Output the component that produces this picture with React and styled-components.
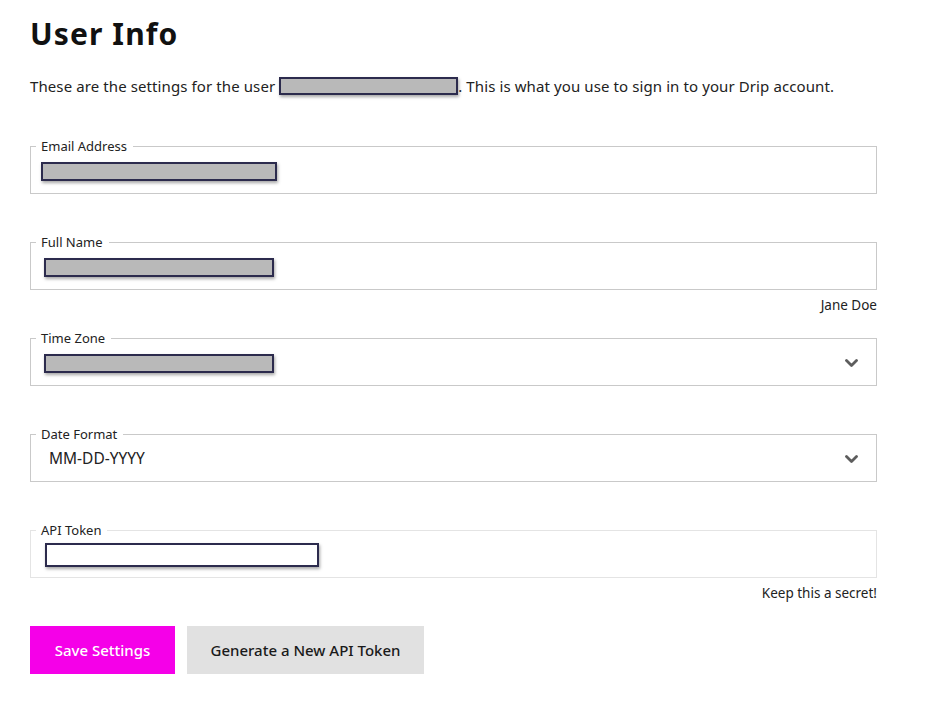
import React from "react";
import styled, { createGlobalStyle } from "styled-components";

const Global = createGlobalStyle`
  html, body { margin: 0; padding: 0; background: #fff; }
  body { font-family: "Noto Sans", Lato, sans-serif; color: #1c1c1c; }
`;

const Page = styled.div`
  width: 847px;
  padding: 14px 0 0 30px;
`;

const Title = styled.h1`
  margin: 0;
  font-size: 30px;
  line-height: 40px;
  font-weight: 700;
  letter-spacing: 1.1px;
  color: #111;
`;

const Intro = styled.p`
  margin: 22px 0 0;
  font-size: 15px;
  line-height: 20px;
  letter-spacing: 0.1px;
  color: #222;
  display: flex;
  align-items: center;
`;

const Redacted = styled.span`
  display: inline-block;
  box-sizing: border-box;
  flex: none;
  width: ${(p) => p.$w}px;
  height: ${(p) => p.$h || 19}px;
  margin-left: ${(p) => p.$ml || 0}px;
  background: ${(p) => (p.$blank ? "#fff" : "#b9b9b9")};
  border: 2px solid #2c2b4d;
  box-shadow: 1px 2px 3px rgba(0, 0, 0, 0.35);
`;

const Form = styled.div`
  margin-top: 42px;
  display: flex;
  flex-direction: column;
`;

const Group = styled.div`
  display: flex;
  flex-direction: column;
`;

const Fieldset = styled.fieldset`
  margin: 0;
  padding: 0 12px 0 10px;
  border: 1px solid ${(p) => (p.$light ? "#e4e4e4" : "#c9c9c9")};
  height: 56px;
  box-sizing: border-box;
  min-width: 0;
`;

const Legend = styled.legend`
  margin-left: -5px;
  padding: 0 6px 0 5px;
  font-size: 13px;
  line-height: 16px;
  color: #222;
`;

const Row = styled.div`
  height: 38px;
  margin-top: -2px;
  display: flex;
  align-items: center;
  justify-content: space-between;
`;

const Value = styled.span`
  font-size: 15.5px;
  color: #222;
  margin-left: 8px;
  margin-top: -3px;
`;

const Hint = styled.div`
  height: 40px;
  box-sizing: border-box;
  padding-top: 7px;
  text-align: right;
  font-size: 13.5px;
  line-height: 16px;
  color: #222;
`;

const Chevron = () => (
  <svg width="13" height="9" viewBox="0 0 13 9" style={{ marginRight: 6 }}>
    <path d="M1.5 1.5 L6.5 6.5 L11.5 1.5" fill="none" stroke="#5d5d5d" strokeWidth="2.8" strokeLinecap="round" strokeLinejoin="round" />
  </svg>
);

const Buttons = styled.div`
  display: flex;
  gap: 12px;
  margin-top: 8px;
`;

const Button = styled.button`
  height: 48px;
  width: ${(p) => p.$w}px;
  border: none;
  border-radius: 0;
  font-family: inherit;
  font-size: 15px;
  font-weight: 500;
  background: ${(p) => (p.$primary ? "#f500e8" : "#e1e1e1")};
  color: ${(p) => (p.$primary ? "#fff" : "#1a1a1a")};
  cursor: pointer;
`;

const Field = ({ label, children, hint, light, select }) => (
  <Group>
    <Fieldset $light={light}>
      <Legend>{label}</Legend>
      <Row>
        {children}
        {select && <Chevron />}
      </Row>
    </Fieldset>
    <Hint>{hint}</Hint>
  </Group>
);

export default function App() {
  return (
    <>
      <Global />
      <Page>
        <Title>User Info</Title>
        <Intro>
          These are the settings for the user&nbsp;
          <Redacted $w={179} $h={18} />
          . This is what you use to sign in to your Drip account.
        </Intro>
        <Form>
          <Field label="Email Address">
            <Redacted $w={236} />
          </Field>
          <Field label="Full Name" hint="Jane Doe">
            <Redacted $w={230} $ml={3} />
          </Field>
          <Field label="Time Zone" select>
            <Redacted $w={230} $ml={3} />
          </Field>
          <Field label="Date Format" select>
            <Value>MM-DD-YYYY</Value>
          </Field>
          <Field label="API Token" light hint="Keep this a secret!">
            <Redacted $w={274} $h={24} $ml={4} $blank />
          </Field>
        </Form>
        <Buttons>
          <Button $primary $w={145}>Save Settings</Button>
          <Button $w={237}>Generate a New API Token</Button>
        </Buttons>
      </Page>
    </>
  );
}
